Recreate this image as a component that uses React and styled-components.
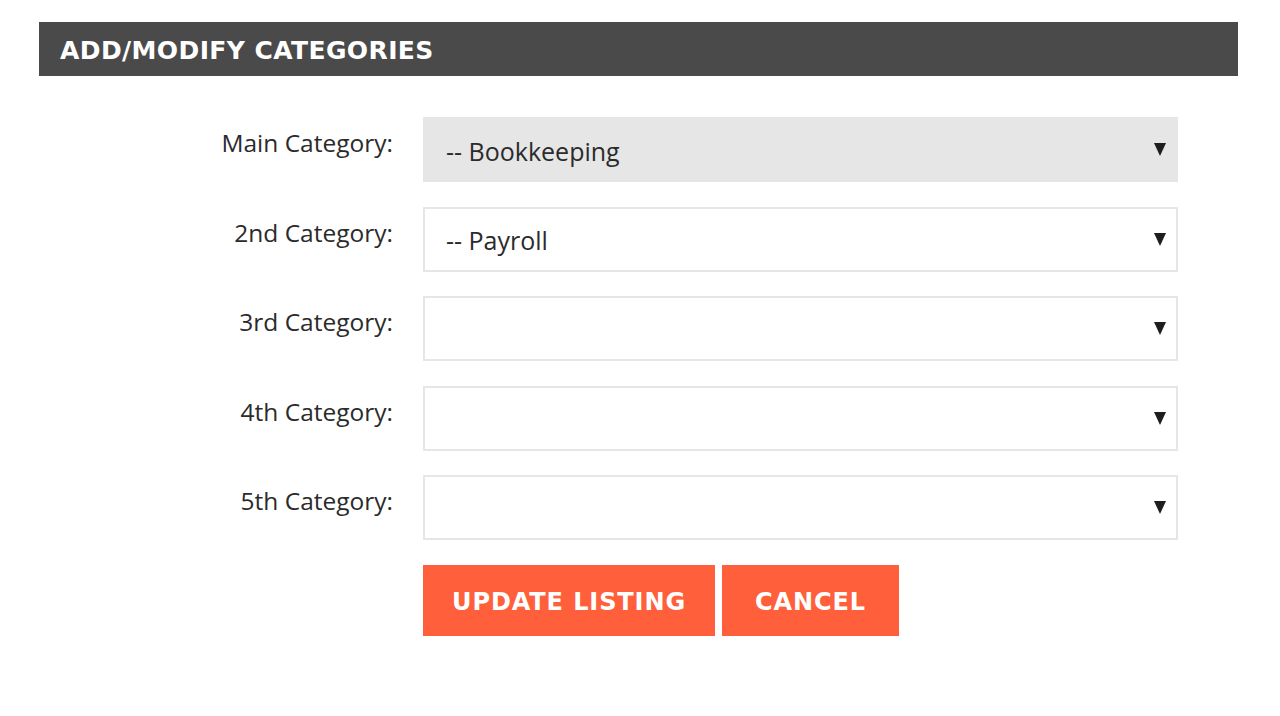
import React from "react";
import styled, { createGlobalStyle } from "styled-components";

const Global = createGlobalStyle`
  html, body { margin: 0; padding: 0; background: #fff; }
  body { font-family: "Open Sans", "Noto Sans", sans-serif; }
  * { box-sizing: border-box; }
`;

const Page = styled.div`
  padding: 22px 42px 0 39px;
`;

const Header = styled.div`
  height: 54px;
  background: #4a4a4a;
  display: flex;
  align-items: center;
  padding-left: 21px;
`;

const Title = styled.h1`
  margin: 0;
  color: #fff;
  font-family: "DejaVu Sans", sans-serif;
  font-weight: 700;
  font-size: 25px;
  letter-spacing: 0.4px;
  text-transform: uppercase;
  line-height: 1;
  padding-top: 2px;
`;

const Form = styled.div`
  display: grid;
  grid-template-columns: 354px 755px;
  column-gap: 30px;
  row-gap: 24.5px;
  margin-top: 41px;
`;

const Label = styled.label`
  text-align: right;
  font-size: 24.5px;
  color: #2b2b2b;
  padding-top: 9px;
  font-family: "Open Sans", sans-serif;
`;

const SelectBox = styled.div`
  height: 65px;
  background: ${(p) => (p.$filled ? "#e6e6e6" : "#fff")};
  border: 2px solid #e6e6e6;
  display: flex;
  align-items: center;
  justify-content: space-between;
  padding: 2px 10px 0 21px;
  font-size: 25px;
  color: #2b2b2b;
  font-family: "Open Sans", sans-serif;
`;

const Arrow = styled.span`
  width: 0;
  height: 0;
  border-left: 6px solid transparent;
  border-right: 6px solid transparent;
  border-top: 13px solid #1e1e1e;
  margin-top: -2px;
`;

const Buttons = styled.div`
  grid-column: 2;
  display: flex;
  gap: 7px;
`;

const Button = styled.button`
  height: 71px;
  padding: 4px ${(p) => p.$pad}px 0;
  background: #ff5f3b;
  border: none;
  color: #fff;
  font-family: "DejaVu Sans", sans-serif;
  font-weight: 700;
  font-size: 24px;
  letter-spacing: 0.9px;
  text-transform: uppercase;
  cursor: pointer;
`;

const rows = [
  { label: "Main Category:", value: "-- Bookkeeping", filled: true },
  { label: "2nd Category:", value: "-- Payroll" },
  { label: "3rd Category:", value: "" },
  { label: "4th Category:", value: "" },
  { label: "5th Category:", value: "" },
];

export default function App() {
  return (
    <Page>
      <Global />
      <Header>
        <Title>ADD/MODIFY CATEGORIES</Title>
      </Header>
      <Form>
        {rows.map((r) => (
          <React.Fragment key={r.label}>
            <Label>{r.label}</Label>
            <SelectBox $filled={r.filled}>
              <span>{r.value}</span>
              <Arrow />
            </SelectBox>
          </React.Fragment>
        ))}
        <Buttons>
          <Button $pad={29}>Update Listing</Button>
          <Button $pad={33}>Cancel</Button>
        </Buttons>
      </Form>
    </Page>
  );
}
